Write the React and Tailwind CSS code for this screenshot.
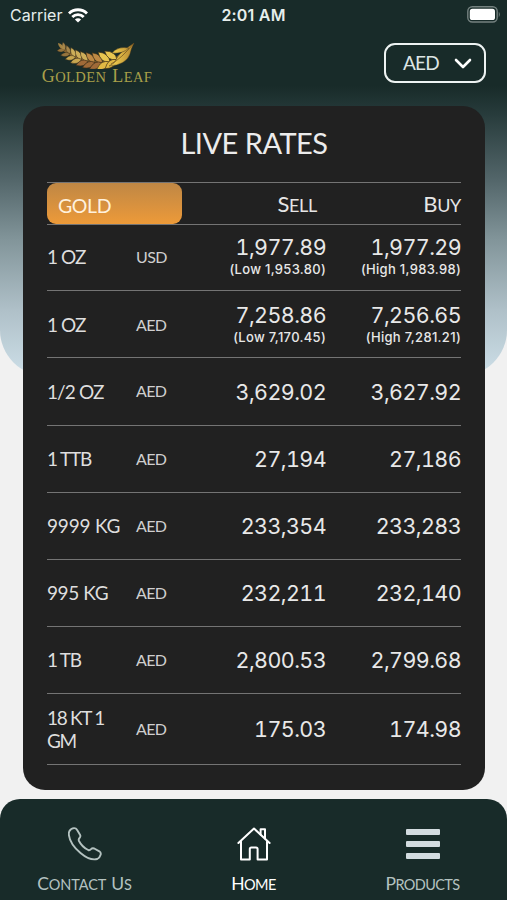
import React from "react";
import clsx from "clsx";

const rates = [
  { unit: "1 OZ", currency: "USD", sell: "1,977.89", buy: "1,977.29", low: "(Low 1,953.80)", high: "(High 1,983.98)", height: "h-[66px] pb-px", tracking: "tracking-[-0.9px]" },
  { unit: "1 OZ", currency: "AED", sell: "7,258.86", buy: "7,256.65", low: "(Low 7,170.45)", high: "(High 7,281.21)", height: "h-[67px] pt-[2px]", tracking: "tracking-[-0.9px]" },
  { unit: "1/2 OZ", currency: "AED", sell: "3,629.02", buy: "3,627.92", height: "h-[68px]", tracking: "tracking-[-0.9px]" },
  { unit: "1 TTB", currency: "AED", sell: "27,194", buy: "27,186", height: "h-[67px]", tracking: "tracking-[-1.2px]" },
  { unit: "9999 KG", currency: "AED", sell: "233,354", buy: "233,283", height: "h-[67px]", tracking: "tracking-[-0.2px]" },
  { unit: "995 KG", currency: "AED", sell: "232,211", buy: "232,140", height: "h-[67px]", tracking: "tracking-[-0.4px]" },
  { unit: "1 TB", currency: "AED", sell: "2,800.53", buy: "2,799.68", height: "h-[67px]", tracking: "tracking-[-1.3px]" },
  { unit: "18 KT 1 GM", currency: "AED", sell: "175.03", buy: "174.98", height: "h-[71px]", tracking: "tracking-[-1.3px]" },
];

// Leaflet pairs along the stem: x, y, length, upper angle, lower angle
const leaflets = [
  [8, 8, 8, -105, 175],
  [13, 12, 9.5, -112, 172],
  [18.5, 15, 10.5, -116, 168],
  [24.5, 17.5, 11.5, -122, 164],
  [31, 19.3, 12.5, -128, 162],
  [38, 20.5, 13.5, -132, 158],
  [45.5, 20.8, 14.5, -136, 154],
  [53, 20, 15.5, -140, 150],
  [60, 17.5, 15, -146, 142],
];

function StatusBar() {
  return (
    <div className="grid grid-cols-3 items-center h-[30px] pl-[10px] pr-[6px] text-[#e6eeec]">
      <div className="flex items-center gap-[6px]">
        <span className="text-[16px]">Carrier</span>
        <svg width="20" height="15" viewBox="0 0 20 15" fill="none" stroke="white" strokeWidth="2.9">
          <path d="M1 5.5a12.8 12.8 0 0 1 18 0" />
          <path d="M4.3 9a8.1 8.1 0 0 1 11.4 0" />
          <path d="M10 14.6 6.9 11.5a4.4 4.4 0 0 1 6.2 0Z" fill="white" stroke="none" />
        </svg>
      </div>
      <span className="text-center text-[16px] font-semibold tracking-[0.2px] -ml-[4px]">2:01 AM</span>
      <svg className="justify-self-end -mt-[2px]" width="34" height="17" viewBox="0 0 34 17">
        <rect x="0.8" y="0.8" width="29.4" height="15.2" rx="4.5" fill="none" stroke="#74817f" strokeWidth="1.4" />
        <rect x="2.8" y="2.8" width="25.2" height="11.2" rx="2.6" fill="white" />
        <path d="M31.8 5.8q2 2.7 0 5.4Z" fill="#74817f" />
      </svg>
    </div>
  );
}

function Logo() {
  return (
    <div className="flex flex-col items-center w-[112px]">
      <svg width="80" height="27" viewBox="0 0 80 27">
        <defs>
          <linearGradient id="gold" x1="0" y1="0" x2="80" y2="0" gradientUnits="userSpaceOnUse">
            <stop offset="0" stopColor="#9a7a3f" />
            <stop offset="0.3" stopColor="#d3b55e" />
            <stop offset="0.5" stopColor="#a9713a" />
            <stop offset="0.72" stopColor="#ecc94c" />
            <stop offset="1" stopColor="#a8792c" />
          </linearGradient>
        </defs>
        <path d="M4 5Q20 20 46 21Q60 20 68 8" fill="none" stroke="#8a6530" strokeWidth="3" />
        <g>
          {leaflets.map(([x, y, len, up, down]) => (
            <g key={x} fill="none" transform={`translate(${x} ${y})`}>
              <path transform={`rotate(${up}) scale(${len / 12})`} d="M0 0Q5-5.5 12 0Q5 5 0 0Z" fill={x < 16 ? "#a5854a" : x < 35 ? "#cdae59" : x < 50 ? "#bd8944" : "#e8c650"} stroke="#3a2d18" strokeWidth="0.5" />
              <path transform={`rotate(${down}) scale(${len / 12})`} d="M0 0Q5-5 12 0Q5 5.5 0 0Z" fill={x < 16 ? "#96743d" : x < 28 ? "#c8a750" : x < 46 ? "#a06a38" : "#e0b844"} stroke="#3a2d18" strokeWidth="0.5" />
            </g>
          ))}
        </g>
        <path d="M8 8Q6 2 1 1Q1 6 8 8Z" fill="url(#gold)" />
        <path d="M52 24Q58 22 60 16Q63 10 77 1Q74 7 73 12Q69 23 52 24Z" fill="url(#gold)" stroke="#3a2d18" strokeWidth="0.4" />
        <path d="M55 11Q61 4 72 6Q66 12 55 11Z" fill="url(#gold)" stroke="#3a2d18" strokeWidth="0.4" />
        <path d="M54 22Q64 17 77 1" fill="none" stroke="#6d4d1c" strokeWidth="0.7" />
      </svg>
      <div className="flex gap-[6px] h-[16px] -mt-px font-['Liberation_Serif',serif] leading-[16px] text-[#aaa04a]">
        <span className="block uppercase text-[14.5px] tracking-[0.4px] first-letter:text-[18px]">Golden</span>{" "}
        <span className="block uppercase text-[14.5px] tracking-[0.4px] first-letter:text-[18px]">Leaf</span>
      </div>
    </div>
  );
}

function RateRow({ rate }) {
  return (
    <div className={clsx("grid grid-cols-[89px_55px_135px_135px] items-center border-b border-[#747474] text-[#e8e8e8]", rate.height)}>
      <span className={clsx("font-[Lato,sans-serif] text-[19px] leading-[23px] pb-px whitespace-nowrap text-[#dedede]", rate.tracking)}>
        {rate.unit === "18 KT 1 GM" ? <>18 KT 1<br />GM</> : rate.unit}
      </span>
      <span className="font-[Lato,sans-serif] text-[16px] pb-px tracking-[-0.6px] text-[#cfcfcf]">{rate.currency}</span>
      <Price value={rate.sell} range={rate.low} />
      <Price value={rate.buy} range={rate.high} />
    </div>
  );
}

function Price({ value, range }) {
  return (
    <div className="flex flex-col items-end whitespace-nowrap">
      <span className="text-[21.5px] leading-[24px] tabular-nums tracking-[-0.6px]">{value}</span>
      {range && <span className="text-[13px] leading-[20px] font-medium tracking-[0.3px]">{range}</span>}
    </div>
  );
}

function NavItem({ words, tracking, active, children }) {
  return (
    <div className={clsx("flex flex-col items-center", active ? "text-white" : "text-[#b4c2c0]")}>
      <div className="flex items-center justify-center h-[36px]">{children}</div>
      <div className="flex gap-[5px] mt-[10px] h-[24px] font-[Lato,sans-serif] leading-[24px]">
        {words.map((word) => (
          <span key={word} className={clsx("block uppercase text-[14.5px] first-letter:text-[17.5px]", tracking)}>{word}</span>
        ))}
      </div>
    </div>
  );
}

export default function App() {
  return (
    <div className="w-[507px] h-[900px] overflow-hidden flex flex-col bg-[#f1f1f1] font-[Inter,sans-serif]">
      <header className="h-[376px] shrink-0 rounded-b-[46px] bg-[linear-gradient(180deg,#182b29_0px,#182b29_86px,#263a3a_112px,#53666a_180px,#82959a_240px,#afc0c8_310px,#cddfe8_376px)]">
        <StatusBar />
        <div className="flex items-start justify-between pl-[41px] pr-[21px] pt-[12px]">
          <Logo />
          <button className="flex items-center justify-between w-[102px] h-[40px] mt-px pl-[17px] pr-[12px] rounded-[11px] border-2 border-[#edf3f2] text-[#dce5e4]">
            <span className="font-[Lato,sans-serif] text-[19px] leading-[24px] pb-px tracking-[-0.8px]">AED</span>
            <svg width="18" height="11" viewBox="0 0 18 11" fill="none" stroke="white" strokeWidth="2.6" strokeLinecap="round" strokeLinejoin="round">
              <path d="m2 2 7 7 7-7" />
            </svg>
          </button>
        </div>
      </header>

      <main className="shrink-0 -mt-[270px] mx-[23px] w-[462px] h-[684px] rounded-[22px] bg-[#212121] px-6">
        <h1 className="h-[76px] pt-[17px] text-center font-[Lato,sans-serif] text-[29px] leading-[40px] tracking-[-0.5px] text-[#ececec]">LIVE RATES</h1>
        <div className="grid grid-cols-[135px_135px_144px] h-[43px] border-y border-[#747474] font-[Lato,sans-serif] text-[#e6e6e6]">
          <div className="flex items-center h-[41px] pt-[4px] pl-[11px] rounded-[9px] bg-linear-to-b from-[#bf8744] to-[#ed9a38] text-[19.5px] tracking-[-0.4px] text-[#fff1dd]">
            GOLD
          </div>
          <div className="text-right leading-[41px] uppercase text-[18px] tracking-[-0.3px] first-letter:text-[22px]">Sell</div>
          <div className="text-right leading-[41px] uppercase text-[18px] tracking-[-0.3px] first-letter:text-[22px]">Buy</div>
        </div>
        {rates.map((rate, index) => (
          <RateRow key={index} rate={rate} />
        ))}
      </main>

      <nav className="grid grid-cols-3 shrink-0 h-[101px] mt-[9px] pt-[27px] rounded-t-[20px] bg-[#182b29]">
        <NavItem words={["Contact", "Us"]} tracking="tracking-[-0.1px]">
          <svg width="34" height="34" viewBox="0 0 34 34" fill="none" stroke="currentColor" strokeWidth="1.9" strokeLinejoin="round">
            <path d="M1.3 4.3Q3 1.2 6 1.1Q8 1 9 2.8L12 7.7Q13 9.5 11.5 11Q10.2 12.3 11 14Q14 20 20.2 23Q21.7 23.6 23 22.2Q24.3 20.7 26.2 21.5L31.4 24.3Q33.3 25.6 32.6 27.8Q31.8 30.8 29.3 32Q22 34 12.5 26Q2 17 .9 8Q.6 6 1.3 4.3Z" />
          </svg>
        </NavItem>
        <NavItem words={["Home"]} tracking="tracking-[-0.6px]" active>
          <svg width="34" height="34" viewBox="0 0 34 34" fill="none" stroke="currentColor" strokeWidth="2" strokeLinecap="round" strokeLinejoin="round">
            <path d="M1.4 16 17 1.6 32.6 16" />
            <path d="M23.6 7.5V2.2H28V11.6" />
            <path d="M4 14.4V32.4H12.8V22Q12.8 20.4 14.4 20.4H19Q20.6 20.4 20.6 22V32.4H30V14.4" />
          </svg>
        </NavItem>
        <NavItem words={["Products"]} tracking="tracking-[-0.6px]">
          <div className="flex flex-col gap-[6px]">
            <span className="w-[34px] h-[6px] rounded-[1px] bg-[#d3dce0]" />
            <span className="w-[34px] h-[6px] rounded-[1px] bg-[#d3dce0]" />
            <span className="w-[34px] h-[6px] rounded-[1px] bg-[#d3dce0]" />
          </div>
        </NavItem>
      </nav>
    </div>
  );
}
